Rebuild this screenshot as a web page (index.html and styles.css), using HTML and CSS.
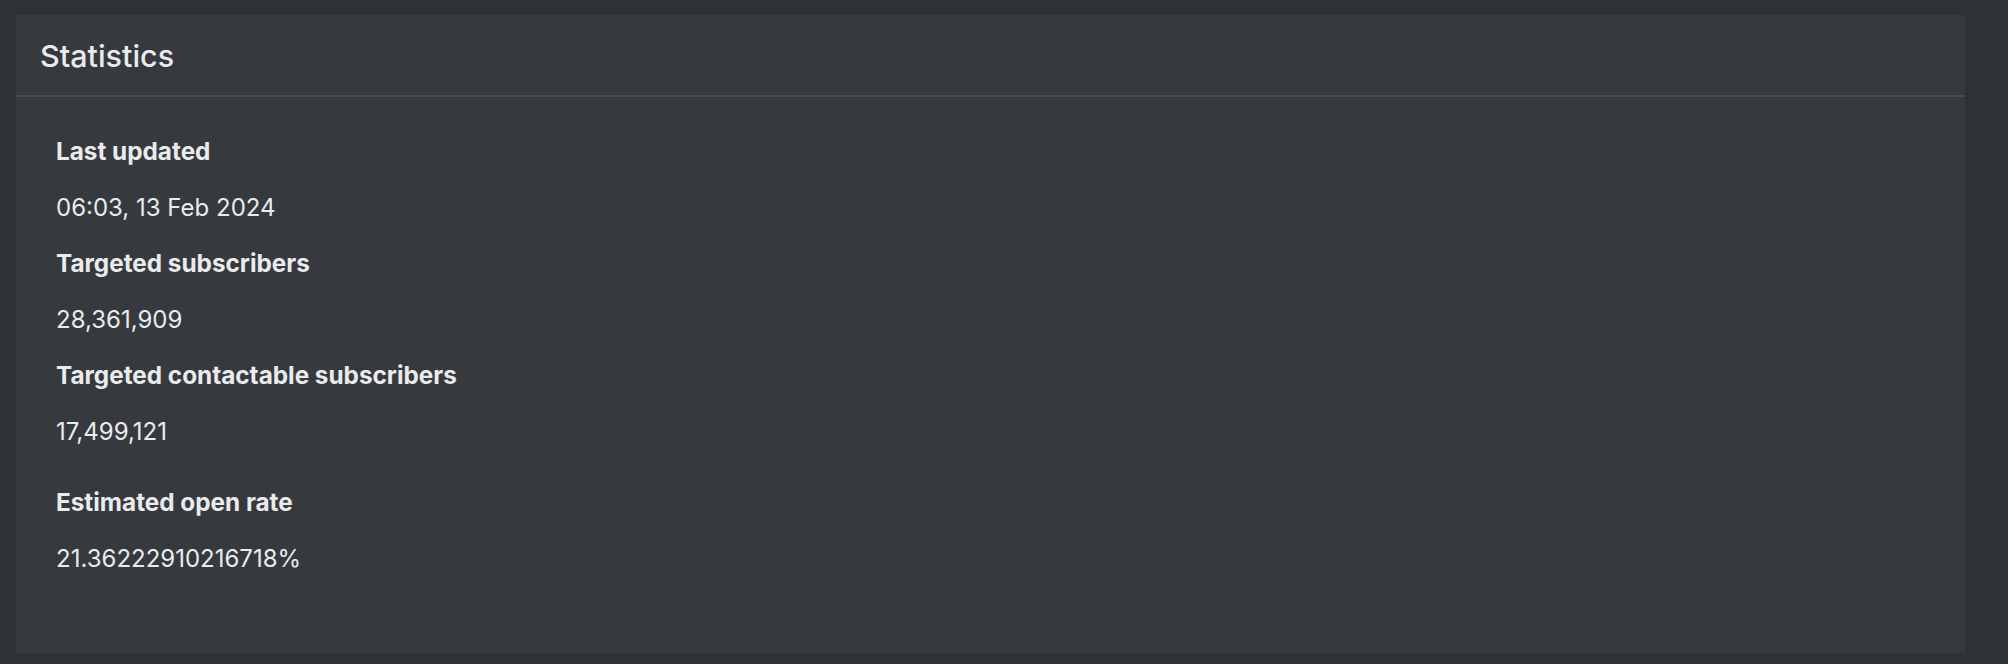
FILE: index.html
```html
<!DOCTYPE html>
<html lang="en">
<head>
    <meta charset="UTF-8">
    <meta name="viewport" content="width=device-width, initial-scale=1.0">
    <title>Statistics</title>
    <link rel="stylesheet" href="styles.css">
</head>
<body>
    <div class="card">
        <div class="card-header">
            <h2>Statistics</h2>
        </div>
        <div class="card-body">
            <dl class="stats">
                <dt>Last updated</dt>
                <dd>06:03, 13 Feb 2024</dd>
                <dt>Targeted subscribers</dt>
                <dd>28,361,909</dd>
                <dt>Targeted contactable subscribers</dt>
                <dd>17,499,121</dd>
            </dl>
            <dl class="stats stats-extra">
                <dt>Estimated open rate</dt>
                <dd>21.36222910216718%</dd>
            </dl>
        </div>
    </div>
</body>
</html>
```

FILE: styles.css
```css
body {
    font-family: Inter, "Noto Sans", sans-serif;
    background-color: #2e3136;
    color: #eaebec;
    margin: 0;
    padding: 15px 43px 11px 16px;
}
.card {
    background: #363a3e;
    height: 638px;
    box-sizing: border-box;
}
.card-header {
    padding: 22px 24px 21px 24px;
    border-bottom: 2px solid #484c51;
}
.card-header h2 {
    margin: 0;
    font-size: 30.5px;
    font-weight: 500;
    line-height: 37px;
}
.card-body {
    padding: 40px 40px 0 40px;
}
.stats {
    margin: 0;
    display: flex;
    flex-direction: column;
    gap: 27px;
}
.stats dt {
    font-size: 24.3px;
    font-weight: 700;
    line-height: 29px;
}
.stats dd {
    margin: 0;
    font-size: 24px;
    line-height: 29px;
}
.stats-extra {
    margin-top: 42px;
}
```
